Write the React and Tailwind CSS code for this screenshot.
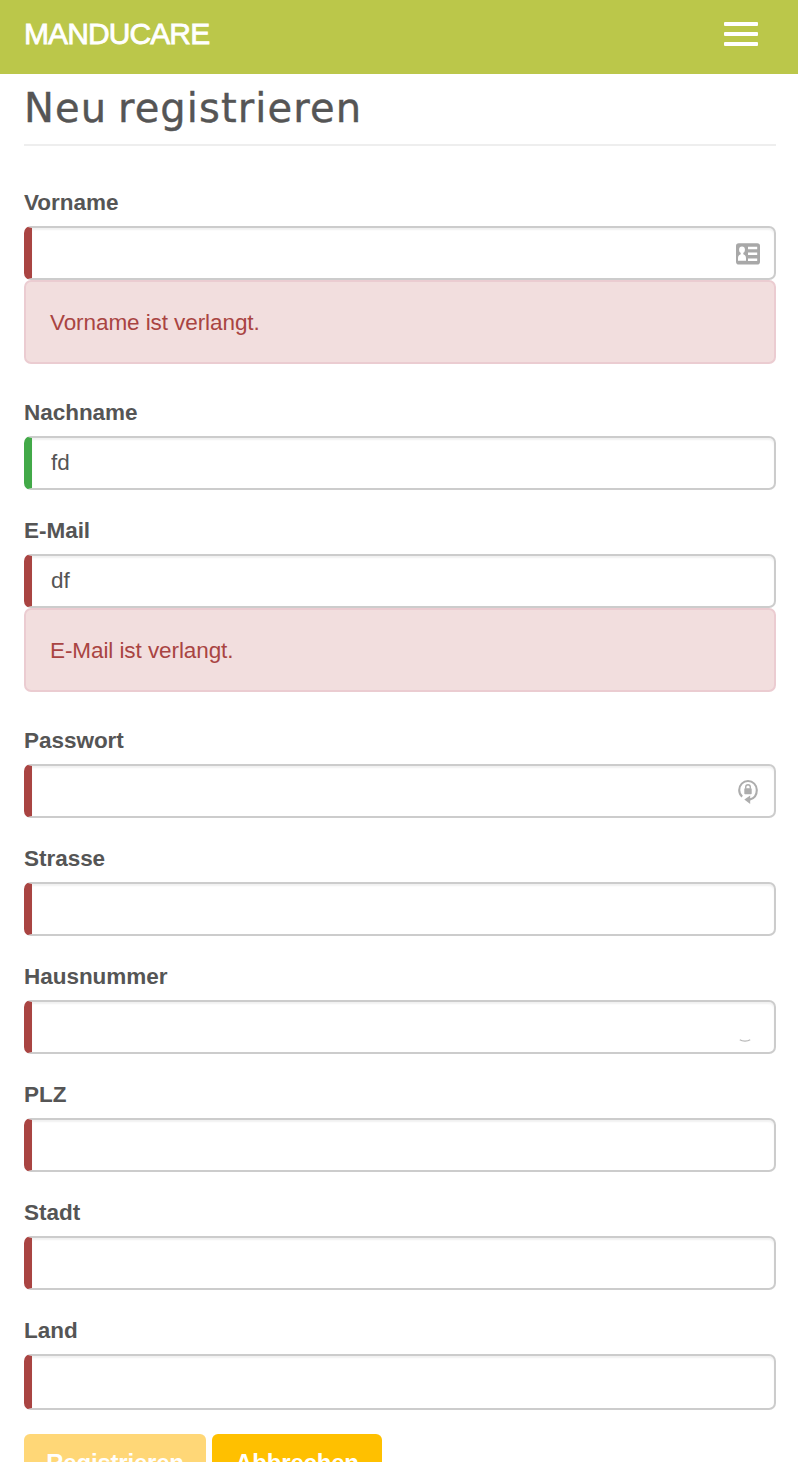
const fields = [
  { label: 'Vorname', error: 'Vorname ist verlangt.', icon: 'card' },
  { label: 'Nachname', value: 'fd', valid: true },
  { label: 'E-Mail', value: 'df', error: 'E-Mail ist verlangt.' },
  { label: 'Passwort', icon: 'lock', type: 'password' },
  { label: 'Strasse' },
  { label: 'Hausnummer', icon: 'arc' },
  { label: 'PLZ' },
  { label: 'Stadt' },
  { label: 'Land', tall: true },
];

function CardIcon() {
  return (
    <svg width="24" height="22" viewBox="0 0 24 22" className="block">
      <rect x="0" y="0.3" width="24" height="21.2" rx="2.8" fill="#a8a8a8" />
      <ellipse cx="6" cy="6.8" rx="2.9" ry="3.2" fill="#fff" />
      <path d="M4.7 8h2.6v3.2c1.8.6 2.7 1.8 2.7 4.2v2.4H2v-2.4c0-2.4.9-3.6 2.7-4.2z" fill="#fff" />
      <path d="M12 3.7h9.2v2.5H12zM12 9.5h9.2V12H12zM12 15.5h9.2V18H12z" fill="#fff" />
    </svg>
  );
}

function LockIcon() {
  return (
    <svg width="24" height="28" viewBox="0 0 24 28" className="block">
      <path d="M6.2 19.6C4.2 18 3.2 15.6 3.2 13a8.8 9 0 0 1 17.6 0c0 5-2.6 8.6-7.3 9.6" fill="none" stroke="#adadad" strokeWidth="2.1" />
      <path d="M8.3 22.6 14.2 18.6V27z" fill="#adadad" />
      <rect x="8.3" y="11.2" width="7.4" height="6" rx="0.8" fill="#adadad" />
      <path d="M9.7 11.8V10a2.3 2.3 0 0 1 4.6 0v1.8" fill="none" stroke="#adadad" strokeWidth="1.4" />
    </svg>
  );
}

function ArcIcon() {
  return (
    <svg width="12" height="4" viewBox="0 0 12 4" className="block">
      <path d="M.8.8C3.5 2.6 8.5 2.6 11.2.8" fill="none" stroke="#b8b8b8" strokeWidth="1.2" />
    </svg>
  );
}

function Field({ label, value, error, icon, valid, tall, type }) {
  return (
    <div className={error ? 'mb-8' : 'mb-6'}>
      <label className="mb-[7px] block h-[33px] pt-px text-[22.5px] leading-8 font-bold tracking-[-0.03px]">{label}</label>
      <div className="relative">
        <input
          type={type || 'text'}
          aria-label={label}
          defaultValue={value}
          className={`block w-full rounded-[7px] border-2 border-l-8 border-[#ccc] bg-white pr-12 pl-[19px] text-[22.5px] text-[#555] shadow-[inset_0_2px_2px_rgba(0,0,0,0.06)] outline-none ${tall ? 'h-14' : 'h-[54px]'} ${valid ? 'border-l-[#42a948]' : 'border-l-[#a94442]'}`}
        />
        {icon === 'card' && <span className="absolute top-[17px] right-4"><CardIcon /></span>}
        {icon === 'lock' && <span className="absolute top-[13px] right-4"><LockIcon /></span>}
        {icon === 'arc' && <span className="absolute top-[39px] right-[25px]"><ArcIcon /></span>}
      </div>
      {error && (
        <div className="flex h-[84px] items-center rounded-[7px] border-2 border-[#ebccd1] bg-[#f2dede] px-6 pt-[2px] text-[22.5px] tracking-[-0.08px] text-[#a94442]">
          {error}
        </div>
      )}
    </div>
  );
}

export default function App() {
  return (
    <div className="h-[1462px] overflow-hidden bg-white font-['Liberation_Sans',Arial,sans-serif] text-[#555]">
      <header className="flex h-[74px] items-start justify-between bg-[#bbc74a] pr-10 pl-6">
        <span className="pt-[14px] text-[30px] leading-10 tracking-[-0.9px] text-white [-webkit-text-stroke:0.8px_white]">MANDUCARE</span>
        <button aria-label="Menu" className="mt-[22px] flex w-[34px] flex-col gap-[6px]">
          <span className="h-1 w-full rounded-[1px] bg-white" />
          <span className="h-1 w-full rounded-[1px] bg-white" />
          <span className="h-1 w-full rounded-[1px] bg-white" />
        </button>
      </header>
      <main className="pr-[22px] pl-6">
        <h1 className="mb-[39px] h-[72px] border-b-2 border-[#eee] pt-[9px] font-['DejaVu_Sans',sans-serif] text-[40px] leading-[50px] font-normal tracking-[1.1px] [word-spacing:-3px] [-webkit-text-stroke:0.4px_#555]">Neu registrieren</h1>
        <form className="pt-px">
          {fields.map((f) => <Field key={f.label} {...f} />)}
          <div className="flex gap-[6px] text-[24px] font-bold tracking-[-0.2px] text-white">
            <button type="button" className="h-14 w-[182px] rounded-md bg-[#ffd777] pt-px">Registrieren</button>
            <button type="button" className="h-14 w-[170px] rounded-md bg-[#ffc000] pt-px">Abbrechen</button>
          </div>
        </form>
      </main>
    </div>
  );
}
